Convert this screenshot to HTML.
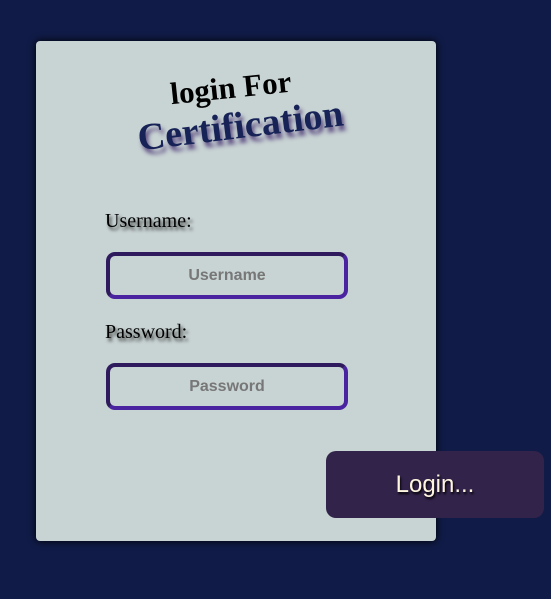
<!DOCTYPE html><html><head><style>
body{margin:0;width:551px;height:599px;background:#101b47;position:relative;overflow:hidden;font-family:"Liberation Serif",serif}
.card{position:absolute;left:36px;top:41px;width:400px;height:500px;background:#c8d3d3;border-radius:4px;box-shadow:0 0 8px #000}
.t1{position:absolute;left:170px;top:70px;font-size:31px;font-weight:bold;transform:rotate(-6deg);color:#000}
.t2{position:absolute;left:137px;top:104px;font-size:38px;font-weight:bold;transform:rotate(-7deg);color:#172257;text-shadow:2px 5px 4px #5a4a80}
.lbl{position:absolute;left:105px;font-size:20px;text-shadow:2px 3px 3px #333}
.in{position:absolute;left:106px;width:234px;height:39px;border:4px solid #4a24a0;border-top-color:#2f1a5e;border-left-color:#2f1a5e;border-radius:9px;text-align:center;font:bold 16px/39px "Liberation Sans",sans-serif;color:#777}
.btn{position:absolute;left:326px;top:451px;width:218px;height:67px;background:#32234a;border-radius:10px;text-align:center;font:24px/67px "Liberation Sans",sans-serif;color:#fff6e0;text-shadow:1px 2px 2px #000}
</style></head><body>
<div class="card"></div>
<div class="t1">login For</div>
<div class="t2">Certification</div>
<div class="lbl" style="top:210px">Username:</div>
<div class="in" style="top:252px">Username</div>
<div class="lbl" style="top:321px">Password:</div>
<div class="in" style="top:363px">Password</div>
<div class="btn">Login...</div>
</body></html>
